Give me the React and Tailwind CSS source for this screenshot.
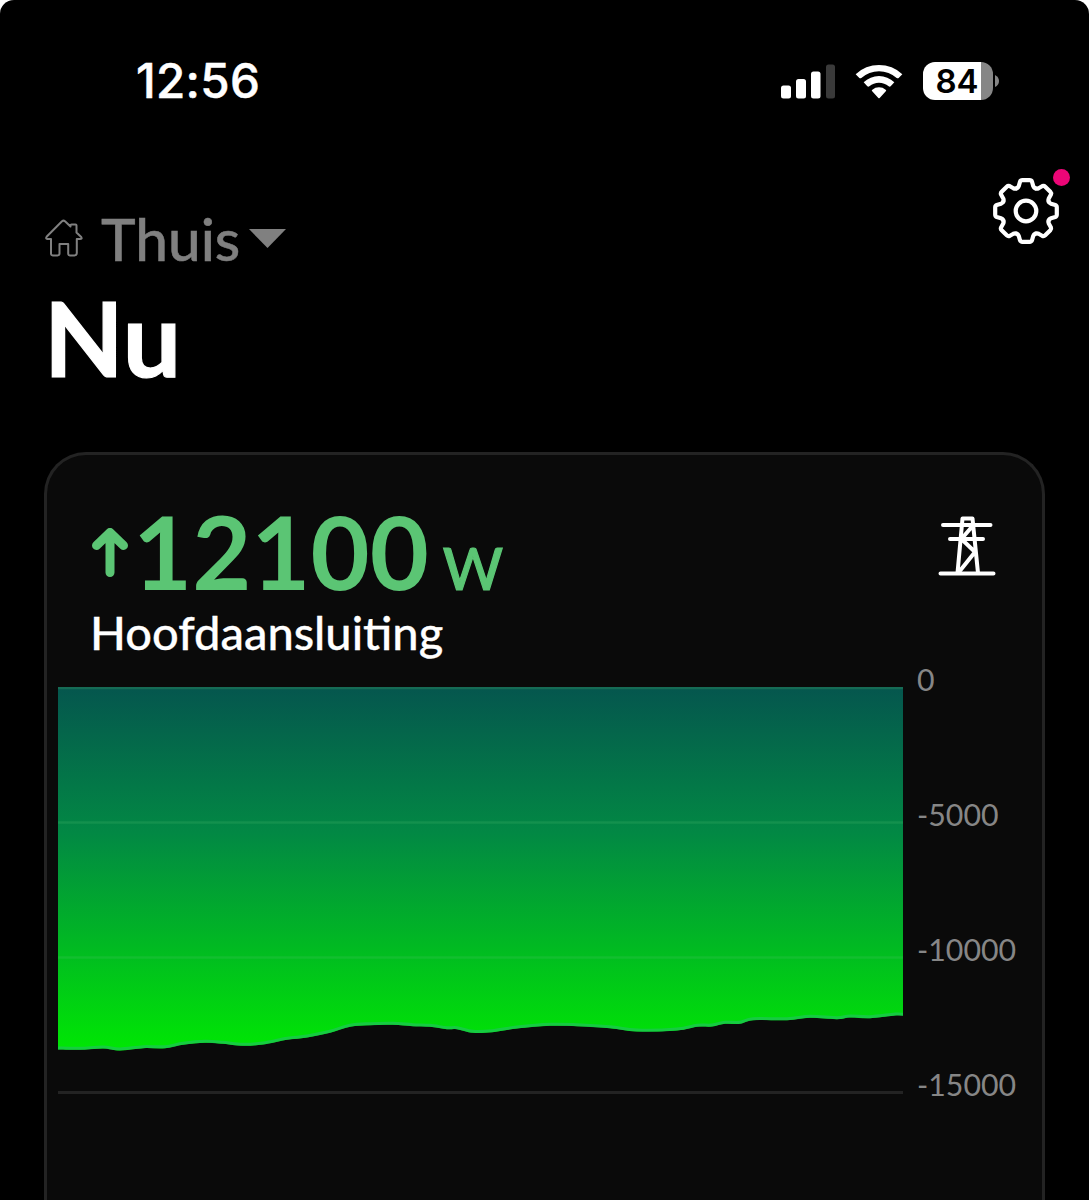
import React from "react";

const AXIS_LABELS = ["0", "-5000", "-10000", "-15000"];

// x, y in chart pixels, 135px per 5000 W
const POINTS = [
  [0, 362.5], [22, 362.8], [45, 361.5], [62, 363.5], [85, 361.2], [107, 361.2],
  [125, 357.8], [147, 355.8], [165, 356.8], [185, 358.8], [205, 357.5],
  [229, 352.8], [249, 350.5], [272, 345.8], [292, 339.8], [312, 338.2],
  [335, 337.8], [355, 339.2], [372, 339.8], [389, 342.2], [399, 342.2],
  [415, 345.8], [434, 345.2], [459, 341.5], [492, 338.8], [519, 339.2],
  [552, 341.2], [579, 344.5], [619, 343.5], [639, 339.8], [654, 339.5],
  [667, 336.8], [682, 336.8], [695, 333.2], [729, 333.2], [752, 330.8],
  [779, 332.2], [792, 330.5], [812, 331.2], [837, 328.5], [845, 328.8],
];

// Catmull-Rom through every sample
const curve = POINTS.slice(1).reduce((d, [x, y], i) => {
  const [px, py] = POINTS[i];
  const [bx, by] = POINTS[i - 1] || POINTS[i];
  const [nx, ny] = POINTS[i + 2] || [x, y];
  return `${d} C${px + (x - bx) / 6} ${py + (y - by) / 6} ${x - (nx - px) / 6} ${y - (ny - py) / 6} ${x} ${y}`;
}, `M${POINTS[0][0]} ${POINTS[0][1]}`);

const App = () => {
  return (
    <div className="h-[1200px] w-full overflow-hidden bg-white font-['Lato',sans-serif]">
      <div className="flex h-full flex-col rounded-t-[14px] bg-black text-white">
        <StatusBar />

        {/* HEADER */}
        <header className="flex h-[288px] shrink-0 items-start justify-between pl-[45px] pr-[19px]">
          <div className="pt-[44px]">
            <div className="flex h-[60px] items-center text-[#808080]">
              <HomeIcon />
              <span className="ml-[18px] text-[58.5px] font-medium leading-[58px] [-webkit-text-stroke:0.5px_#808080]">
                Thuis
              </span>
              <svg className="ml-[9px] h-[19px] w-[37px]" viewBox="0 0 37 19" fill="currentColor">
                <path d="M0 0H37L18.5 19Z" />
              </svg>
            </div>
            <h1 className="-ml-px mt-[27px] text-[103.5px] font-bold leading-[84px] [-webkit-text-stroke:1.2px_#fff]">
              Nu
            </h1>
          </div>

          <div className="relative mt-[14px] mr-[11px]">
            <GearIcon />
            <span className="absolute -right-[11px] -top-[9px] size-[17px] rounded-full bg-[#ec0677]" />
          </div>
        </header>

        {/* CONNECTION CARD */}
        <section className="mx-[44px] h-[748px] shrink-0 rounded-t-[42px] border-[3px] border-b-0 border-[#232323] bg-[#0a0a0a]">
          <div className="flex h-[232px] items-start justify-between pl-[43px] pr-[46px] pt-[54px]">
            <div>
              <div className="flex h-[96px] items-baseline text-[#5bc574]">
                <ArrowUp />
                <span className="ml-[5px] text-[102px] font-bold leading-[84px]">12100</span>
                <span className="ml-[14px] text-[58px] font-medium leading-[60px] [-webkit-text-stroke:1.2px_#5bc574]">
                  W
                </span>
              </div>
              <p className="text-[47px] font-medium leading-[54px] [-webkit-text-stroke:0.3px_#fff]">
                Hoofdaansluiting
              </p>
            </div>
            <PylonIcon />
          </div>
          <PowerChart />
        </section>
      </div>
    </div>
  );
};

// --- COMPONENTS ---
const StatusBar = () => (
  <div className="flex h-[164px] shrink-0 items-start justify-between pl-[136px] pr-[90px] pt-[62px] font-['Inter',sans-serif]">
    <span className="text-[47.5px] font-medium leading-[38px] tracking-[0.3px] [-webkit-text-stroke:0.5px_#fff]">
      12:56
    </span>
    <div className="flex h-[38px] items-center">
      <svg className="h-[35px] w-[54px]" viewBox="0 0 54 35" fill="currentColor">
        <rect x="0" y="21.5" width="10" height="13" rx="2.5" />
        <rect x="15" y="15" width="10" height="19.5" rx="2.5" />
        <rect x="30" y="7.5" width="9.5" height="27" rx="2.5" />
        <rect x="45" y="0.5" width="9" height="34" rx="2.5" fill="#3a3a3a" />
      </svg>
      <svg className="ml-[20px] h-[35px] w-[48px]" viewBox="0 0 144 105" fill="currentColor">
        <path d="M2 31A101 101 0 0 1 142 31L131 42Q128 44 125 42A79 79 0 0 0 19 42Q16 44 13 42Z" />
        <path d="M26 55A66 66 0 0 1 118 55L107 67Q104 69 101 67A45 45 0 0 0 43 67Q40 69 37 67Z" />
        <path d="M51 81Q49 79 52 77A31 31 0 0 1 92 77Q95 79 93 81L74 102Q72 104 70 102Z" />
      </svg>
      <div className="ml-[20px] flex h-[38px] w-[70px] items-center justify-center rounded-[12px] bg-[linear-gradient(90deg,#fff_58.5px,#868686_58.5px)] pr-[2px] text-[33px] font-semibold leading-none text-black">
        84
      </div>
      <svg className="ml-[2px] h-[12px] w-[4px]" viewBox="0 0 4 12" fill="#868686">
        <path d="M0 0Q4 2 4 6T0 12Z" />
      </svg>
    </div>
  </div>
);

const HomeIcon = () => (
  <svg
    className="h-[38px] w-[38px]"
    viewBox="0 0 38 38"
    fill="none"
    stroke="currentColor"
    strokeWidth="2"
    strokeLinejoin="round"
  >
    <path d="M17 2.2Q18.5 1 20 2.2L25.5 7.5V6.5Q25.5 5.5 26.5 5.5H30.5Q31.5 5.5 31.5 6.5V13.5L36.2 18Q37.5 20 35 20H31.8V34Q31.8 36.4 29.5 36.4H24.8Q23.2 36.4 23.2 34.5V25H14.5V34.5Q14.5 36.4 12.5 36.4H7.8Q6 36.4 6 34.5V20H2.5Q.2 19.5 1.8 17.5Z" />
  </svg>
);

const GearIcon = () => (
  <svg
    className="h-[66px] w-[66px]"
    viewBox="-33 -33 66 66"
    fill="none"
    stroke="currentColor"
    strokeWidth="4.2"
    strokeLinejoin="round"
    strokeLinecap="round"
  >
    {[0, 45, 90, 135, 180, 225, 270, 315].map((angle) => (
      <path
        key={angle}
        transform={`rotate(${angle})`}
        d="M-9.4 -22.7Q-7.8 -23.3 -7.2 -25L-6 -29.3Q-5.4 -30.8 -3.6 -30.8H3.6Q5.4 -30.8 6 -29.3L7.2 -25Q7.8 -23.3 9.4 -22.7"
      />
    ))}
    <circle r="10.3" />
  </svg>
);

const ArrowUp = () => (
  <svg
    className="h-[62px] w-[38px]"
    viewBox="0 0 38 62"
    fill="none"
    stroke="currentColor"
    strokeWidth="9"
    strokeLinecap="round"
    strokeLinejoin="round"
  >
    <path d="M20 44.5V4.5M6.5 17.5L20 4.5L33.5 17.5" />
  </svg>
);

const PylonIcon = () => (
  <svg
    className="mt-[5px] h-[64px] w-[58px]"
    viewBox="0 0 58 64"
    fill="none"
    stroke="currentColor"
    strokeWidth="4"
    strokeLinecap="round"
    strokeLinejoin="round"
  >
    <path d="M2.5 59.5H55.5M5 11H52.5M12 25H45" />
    <path d="M19.5 59L24.5 4.5H34.5L40 59M34.5 12L23.5 25L37 38L21 58" />
  </svg>
);

const PowerChart = () => (
  <div className="flex pl-[11px]">
    <svg className="h-[409px] w-[845px]" viewBox="0 0 845 409">
      <defs>
        <linearGradient id="power" x1="0" y1="0" x2="0" y2="1">
          <stop offset="0" stopColor="#05564e" />
          <stop offset="0.4" stopColor="#028844" />
          <stop offset="1" stopColor="#00e703" />
        </linearGradient>
      </defs>
      <path d="M0 405.5H845" stroke="#232323" strokeWidth="3" />
      <path d={`${curve} V0 H0 Z`} fill="url(#power)" />
      <path
        d={curve}
        transform="translate(0 -1.5)"
        fill="none"
        stroke="#1cc750"
        strokeOpacity="0.8"
        strokeWidth="3"
      />
      <path d="M0 1H845M0 135.5H845M0 270.5H845" stroke="#5bc574" strokeOpacity="0.2" strokeWidth="2.5" />
    </svg>
    <div className="-mt-[26px] ml-[14px] flex flex-col text-[30.3px] text-[#868686]">
      {AXIS_LABELS.map((label) => (
        <span key={label} className="h-[135px] leading-[36px]">
          {label}
        </span>
      ))}
    </div>
  </div>
);

export default App;
